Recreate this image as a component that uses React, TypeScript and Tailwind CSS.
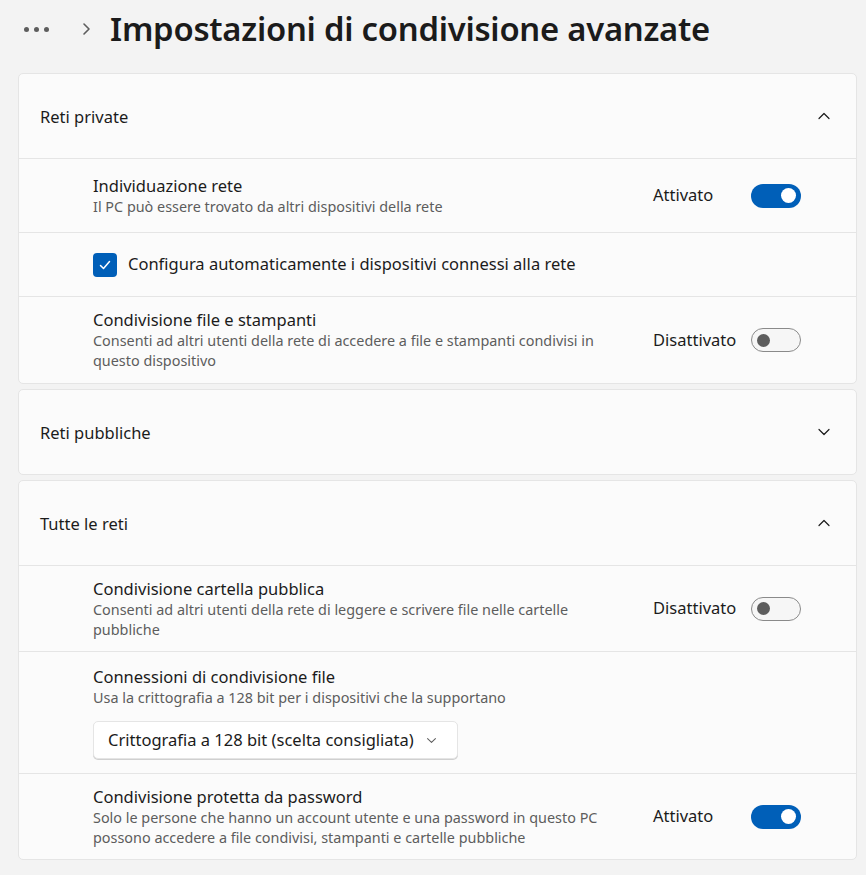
import { ReactNode } from "react";

const FONT = { fontFamily: '"Noto Sans", "Open Sans", sans-serif' };

function Chevron({ up, small }: { up?: boolean; small?: boolean }) {
  const s = small ? 11 : 14;
  return (
    <svg width={s} height={s} viewBox="0 0 14 14" fill="none" stroke={small ? "#5d5d5d" : "#1b1b1b"} strokeWidth={small ? 1.3 : 1.2} strokeLinecap="round" strokeLinejoin="round">
      {up ? <path d="M2 9.5 L7 4.5 L12 9.5" /> : <path d="M2 4.5 L7 9.5 L12 4.5" />}
    </svg>
  );
}

function Toggle({ on }: { on: boolean }) {
  return on ? (
    <div className="flex h-[24px] w-[50px] items-center justify-end rounded-full bg-[#005fb8] pr-[5px]">
      <div className="h-[15px] w-[15px] rounded-full bg-white" />
    </div>
  ) : (
    <div className="flex h-[24px] w-[50px] items-center rounded-full border border-[#8a8a8a] bg-[#f6f6f6] pl-[5px]">
      <div className="h-[13px] w-[13px] rounded-full bg-[#5d5d5d]" />
    </div>
  );
}

function Header({ title, open }: { title: string; open: boolean }) {
  return (
    <div className="flex h-[84px] items-center justify-between pl-[21px] pr-[25px]">
      <span className="pt-[2px] text-[16.5px] text-[#1b1b1b]">{title}</span>
      <Chevron up={open} />
    </div>
  );
}

function Row({ title, sub, on, children, h }: { title: string; sub: ReactNode; on?: boolean; children?: ReactNode; h: string }) {
  return (
    <div className={`flex items-center border-t border-[#e5e5e5] pl-[74px] pr-[55px] ${h}`}>
      <div className="flex-1">
        <div className="text-[16.5px] leading-[22px] text-[#1b1b1b]">{title}</div>
        <div className="w-[525px] text-[14.4px] leading-[20px] text-[#5d5d5d]">{sub}</div>
        {children}
      </div>
      {on !== undefined && (
        <div className="flex items-center">
          <span className="w-[98px] text-[16.5px] text-[#1b1b1b]">{on ? "Attivato" : "Disattivato"}</span>
          <Toggle on={on} />
        </div>
      )}
    </div>
  );
}

export default function App() {
  return (
    <div className="min-h-[875px] bg-[#f3f3f3] pb-4" style={FONT}>
      <div className="flex h-[58px] items-center pl-[24px]">
        <div className="flex gap-[5px]">
          <div className="h-[5px] w-[5px] rounded-full bg-[#5d5d5d]" />
          <div className="h-[5px] w-[5px] rounded-full bg-[#5d5d5d]" />
          <div className="h-[5px] w-[5px] rounded-full bg-[#5d5d5d]" />
        </div>
        <svg className="ml-[32px]" width="10" height="14" viewBox="0 0 10 14" fill="none" stroke="#5d5d5d" strokeWidth="1.6" strokeLinecap="round" strokeLinejoin="round">
          <path d="M3 2 L8 7 L3 12" />
        </svg>
        <h1 className="ml-[19px] text-[32.8px] font-semibold tracking-[-0.25px] text-[#1b1b1b]">Impostazioni di condivisione avanzate</h1>
      </div>

      <div className="ml-[18px] mt-[15px] flex w-[839px] flex-col gap-[5px]">
        <div className="overflow-hidden rounded-[5px] border border-[#e5e5e5] bg-[#fbfbfb]">
          <Header title="Reti private" open />
          <Row h="h-[74px]" title="Individuazione rete" sub="Il PC può essere trovato da altri dispositivi della rete" on />
          <div className="flex h-[64px] items-center gap-[11px] border-t border-[#e5e5e5] pl-[74px]">
            <div className="flex h-[24px] w-[24px] items-center justify-center rounded-[4px] bg-[#005fb8]">
              <svg width="14" height="14" viewBox="0 0 14 14" fill="none" stroke="white" strokeWidth="1.5" strokeLinecap="round" strokeLinejoin="round">
                <path d="M2.5 7.5 L5.5 10.5 L11.5 3.5" />
              </svg>
            </div>
            <span className="text-[16.5px] text-[#1b1b1b]">Configura automaticamente i dispositivi connessi alla rete</span>
          </div>
          <Row h="h-[87px]" title="Condivisione file e stampanti" sub="Consenti ad altri utenti della rete di accedere a file e stampanti condivisi in questo dispositivo" on={false} />
        </div>

        <div className="rounded-[5px] border border-[#e5e5e5] bg-[#fbfbfb]">
          <Header title="Reti pubbliche" open={false} />
        </div>

        <div className="overflow-hidden rounded-[5px] border border-[#e5e5e5] bg-[#fbfbfb]">
          <Header title="Tutte le reti" open />
          <Row h="h-[86px]" title="Condivisione cartella pubblica" sub="Consenti ad altri utenti della rete di leggere e scrivere file nelle cartelle pubbliche" on={false} />
          <Row h="h-[122px]" title="Connessioni di condivisione file" sub="Usa la crittografia a 128 bit per i dispositivi che la supportano">
            <div className="mt-[13px] flex h-[38px] w-[365px] items-center justify-between rounded-[5px] border border-[#e5e5e5] bg-white pl-[14px] pr-[20px] shadow-[0_1px_0_#d0d0d0]">
              <span className="text-[16.5px] text-[#1b1b1b]">Crittografia a 128 bit (scelta consigliata)</span>
              <Chevron small />
            </div>
          </Row>
          <Row h="h-[86px]" title="Condivisione protetta da password" sub="Solo le persone che hanno un account utente e una password in questo PC possono accedere a file condivisi, stampanti e cartelle pubbliche" on />
        </div>
      </div>
    </div>
  );
}
